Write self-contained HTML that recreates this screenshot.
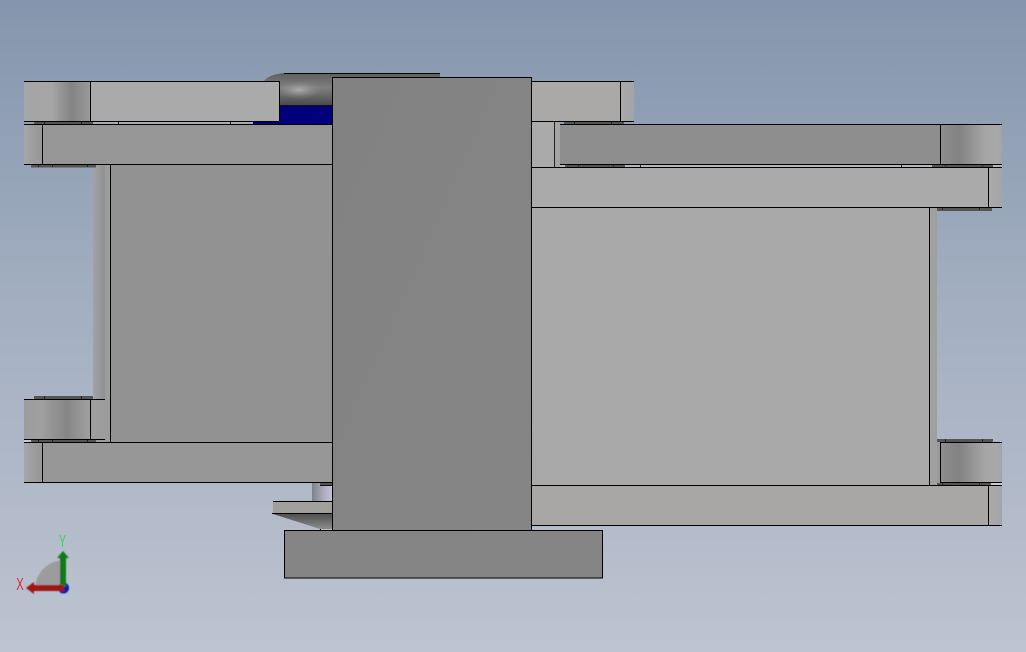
<!DOCTYPE html>
<html>
<head>
<meta charset="utf-8">
<style>
html,body{margin:0;padding:0;width:1026px;height:652px;overflow:hidden;background:#a5b1c2}
svg{display:block}
text{font-family:"Liberation Sans",sans-serif}
path,rect{shape-rendering:crispEdges}
.a{shape-rendering:auto}
</style>
</head>
<body>
<svg width="1026" height="652" viewBox="0 0 1026 652" xmlns="http://www.w3.org/2000/svg">
<defs>
<linearGradient id="bg" x1="0" y1="0" x2="0" y2="1">
<stop offset="0" stop-color="#8495ad"/>
<stop offset=".45" stop-color="#a2aec0"/>
<stop offset="1" stop-color="#bdc3d0"/>
</linearGradient>
<linearGradient id="rollL" x1="0" y1="0" x2="1" y2="0">
<stop offset="0" stop-color="#a6a8ac"/>
<stop offset=".12" stop-color="#a5a5a5"/>
<stop offset=".42" stop-color="#a6a6a6"/>
<stop offset=".72" stop-color="#838383"/>
<stop offset="1" stop-color="#9a9a9a"/>
</linearGradient>
<linearGradient id="rollL2" x1="0" y1="0" x2="1" y2="0">
<stop offset="0" stop-color="#9b9c9e"/>
<stop offset=".25" stop-color="#a0a0a0"/>
<stop offset=".65" stop-color="#868686"/>
<stop offset="1" stop-color="#a0a0a0"/>
</linearGradient>
<linearGradient id="rollR" x1="0" y1="0" x2="1" y2="0">
<stop offset="0" stop-color="#8e8e8e"/>
<stop offset=".3" stop-color="#828282"/>
<stop offset=".72" stop-color="#a6a6a6"/>
<stop offset=".92" stop-color="#a8a8a8"/>
<stop offset="1" stop-color="#a0a4ac"/>
</linearGradient>
<linearGradient id="endL" x1="0" y1="0" x2="1" y2="0">
<stop offset="0" stop-color="#a5a8ae"/>
<stop offset=".4" stop-color="#9f9f9f"/>
<stop offset="1" stop-color="#979797"/>
</linearGradient>
<linearGradient id="endR" x1="0" y1="0" x2="1" y2="0">
<stop offset="0" stop-color="#aaaaaa"/>
<stop offset=".7" stop-color="#a6a6a6"/>
<stop offset="1" stop-color="#a0a5ae"/>
</linearGradient>
<linearGradient id="dome" x1="0" y1="0" x2="0" y2="1">
<stop offset="0" stop-color="#5e5e5e"/>
<stop offset=".45" stop-color="#7f7f7f"/>
<stop offset="1" stop-color="#4a4a4a"/>
</linearGradient>
<radialGradient id="glow" cx=".5" cy=".5" r=".5">
<stop offset="0" stop-color="#b4b4b4" stop-opacity=".9"/>
<stop offset="1" stop-color="#8a8a8a" stop-opacity="0"/>
</radialGradient>
<linearGradient id="cone" x1="0" y1="0" x2="0" y2="1">
<stop offset="0" stop-color="#505050"/>
<stop offset="1" stop-color="#8c8c8c"/>
</linearGradient>
<linearGradient id="shaft" x1="0" y1="0" x2="1" y2="0">
<stop offset="0" stop-color="#7e8089"/>
<stop offset=".55" stop-color="#a9abbd"/>
<stop offset="1" stop-color="#c0c4d2"/>
</linearGradient>
<linearGradient id="center" x1="0" y1="0" x2="1" y2="1">
<stop offset="0" stop-color="#828282"/>
<stop offset="1" stop-color="#858585"/>
</linearGradient>
<linearGradient id="colL" x1="0" y1="0" x2="1" y2="0">
<stop offset="0" stop-color="#a0a3a8"/>
<stop offset="1" stop-color="#8f8f8f"/>
</linearGradient>
<filter id="soft"><feGaussianBlur stdDeviation="0.5"/></filter>
</defs>

<rect width="1026" height="652" fill="url(#bg)"/>

<!-- dome and blue body behind the plates -->
<path class="a" d="M264 105 V81 C268 76 275 74 284 73 H440 V105 Z" fill="url(#dome)"/>
<ellipse class="a" cx="299" cy="90" rx="24" ry="9" fill="url(#glow)"/>
<path d="M284 73.5 H440" stroke="#000" stroke-width="1"/>
<rect x="253" y="105" width="80" height="19" fill="#00007d"/>
<path d="M279 105.5 H332" stroke="#111"/>

<!-- left column -->
<rect x="93" y="164" width="12" height="236" fill="url(#colL)"/>
<rect x="105" y="164" width="5" height="278" fill="#9c9c9c"/>
<rect x="93" y="400" width="12" height="42" fill="#9d9d9d"/>
<rect x="110" y="164" width="222" height="278" fill="#929292"/>
<path d="M110.5 164 V442" stroke="#000"/>

<!-- left top roller / plate -->
<rect x="24" y="81" width="66" height="41" fill="url(#rollL)"/>
<rect x="90" y="81" width="190" height="41" fill="#aaaaaa"/>
<path d="M24 81.5 H279.5 V121.5 M24 121.5 H279.5 M90.5 81 V121" fill="none" stroke="#000"/>

<!-- strip between -->
<rect x="93" y="122" width="160" height="2" fill="#a9adb3"/>
<rect x="34" y="122" width="59" height="2.5" fill="#555"/>
<path d="M44.5 122 V124 M81.5 122 V124 M118.5 122 V124 M230.5 122 V124" stroke="#222"/>

<!-- left top bar -->
<rect x="24" y="124" width="18" height="41" fill="url(#endL)"/>
<rect x="42" y="124" width="290" height="41" fill="#969696"/>
<path d="M24 124.5 H332 M24 164.5 H332 M42.5 124 V164" fill="none" stroke="#000"/>
<rect x="31" y="165" width="65" height="2.5" fill="#555"/>
<path d="M38.5 165 V167 M52.5 165 V167 M87.5 165 V167" stroke="#222"/>

<!-- left lower roller -->
<rect x="34" y="396" width="59" height="3" fill="#555"/>
<path d="M44.5 396 V399 M81.5 396 V399" stroke="#222"/>
<rect x="24" y="399" width="66" height="41" fill="url(#rollL2)"/>
<rect x="90" y="399" width="15" height="41" fill="#9d9d9d"/>
<path d="M24 399.5 H105 M24 439.5 H105 M90.5 399 V439" fill="none" stroke="#000"/>
<rect x="24" y="440" width="8" height="2" fill="#c8ccd4"/>
<rect x="31" y="440" width="65" height="2.5" fill="#555"/>
<path d="M38.5 440 V442 M52.5 440 V442 M87.5 440 V442" stroke="#222"/>

<!-- left bottom bar -->
<rect x="24" y="442" width="18" height="41" fill="url(#endL)"/>
<rect x="42" y="442" width="290" height="41" fill="#979797"/>
<path d="M24 442.5 H332 M24 482.5 H332 M42.5 442 V482" fill="none" stroke="#000"/>

<!-- shaft and disc under left bar -->
<rect x="312" y="483" width="20" height="19" fill="url(#shaft)"/>
<rect x="320" y="483" width="12" height="3" fill="#555"/>
<path d="M320 485.5 H332" stroke="#111"/>
<rect x="273" y="501" width="59" height="12" fill="#a09f9c"/>
<path d="M273 501.5 H332 M272 513.5 H332" stroke="#000"/>
<path class="a" d="M273 514 H332 V529 H320 Z" fill="url(#cone)"/>
<path d="M320 529.5 H321" stroke="#000"/>

<!-- right upper plate -->
<rect x="531" y="81" width="89" height="41" fill="#aaa9a8"/>
<rect x="620" y="81" width="14" height="41" fill="url(#endR)"/>
<path d="M531 81.5 H634 M531 121.5 H634 M620.5 81 V121" fill="none" stroke="#000"/>
<rect x="564" y="122" width="60" height="2.5" fill="#555"/>
<path d="M574.5 122 V124 M611.5 122 V124" stroke="#222"/>

<!-- right strip under plate -->
<rect x="531" y="122" width="23" height="45" fill="#aaaaaa"/>
<rect x="555" y="122" width="5" height="45" fill="#a4a4a4"/>
<path d="M554.5 122 V167" stroke="#222"/>

<!-- right dark bar + roller -->
<rect x="560" y="124" width="381" height="41" fill="#8e8e8e"/>
<rect x="941" y="124" width="61" height="41" fill="url(#rollR)"/>
<path d="M560 124.5 H1002 M560 164.5 H1002 M940.5 124 V164" fill="none" stroke="#000"/>
<rect x="560" y="165" width="442" height="2" fill="#b5b8bf"/>
<rect x="565" y="165" width="60" height="2.5" fill="#555"/>
<rect x="932" y="165" width="61" height="2.5" fill="#555"/>
<path d="M578.5 165 V167 M613.5 165 V167 M640.5 165 V167 M901.5 165 V167 M945.5 165 V167 M982.5 165 V167" stroke="#222"/>

<!-- right mid bar -->
<rect x="531" y="167" width="458" height="41" fill="#aaaaaa"/>
<rect x="989" y="167" width="13" height="41" fill="url(#endR)"/>
<path d="M531 167.5 H1002 M531 207.5 H1002 M988.5 167 V207" fill="none" stroke="#000"/>
<rect x="937" y="208" width="55" height="3" fill="#555"/>
<path d="M942.5 208 V210 M979.5 208 V210" stroke="#222"/>

<!-- right panel -->
<rect x="531" y="208" width="399" height="278" fill="#a9a9a9"/>
<rect x="930" y="208" width="7" height="278" fill="#a0a0a0"/>
<path d="M929.5 207 V485" stroke="#000"/>

<!-- right lower roller -->
<rect x="937" y="439" width="56" height="3" fill="#555"/>
<path d="M945.5 439 V442 M982.5 439 V442" stroke="#222"/>
<rect x="937" y="442" width="4" height="41" fill="#9a9a9a"/>
<rect x="941" y="442" width="61" height="41" fill="url(#rollR)"/>
<path d="M940 442.5 H1002 M940 482.5 H1002 M940.5 442 V482" fill="none" stroke="#000"/>
<rect x="991" y="483" width="11" height="2" fill="#c8ccd4"/>
<rect x="937" y="483" width="54" height="2.5" fill="#555"/>
<path d="M942.5 483 V485 M979.5 483 V485" stroke="#222"/>

<!-- right bottom bar -->
<rect x="531" y="485" width="458" height="41" fill="#a8a7a6"/>
<rect x="989" y="485" width="13" height="41" fill="url(#endR)"/>
<path d="M531 485.5 H1002 M531 525.5 H1002 M988.5 485 V525" fill="none" stroke="#000"/>

<!-- centre column -->
<rect x="332.5" y="77.5" width="199" height="453" fill="url(#center)" stroke="#000"/>

<!-- base block -->
<rect x="284.5" y="530.5" width="318" height="47.5" fill="#858585" stroke="#000"/>

<!-- triad -->
<g filter="url(#soft)">
<path class="a" d="M63 588 H35 C36 572 48 561 63 560 Z" fill="#9c9c9e"/>
<circle class="a" cx="63.500" cy="588" r="5.500" fill="#0a1aa8"/>
<path class="a" d="M60 586 V558 H57 L63 551 L69 558 H66 V587 Z" fill="#0a7a14"/>
<path class="a" d="M64 585 H34 V582 L26 588 L34 594 V591 H64 Z" fill="#a01414"/>
</g>
<text x="0" y="0" font-size="18" fill="#35d35a" text-anchor="middle" transform="translate(62.500 547) scale(.62 .95)">Y</text>
<text x="0" y="0" font-size="18" fill="#d8283c" text-anchor="middle" transform="translate(20 590) scale(.62 .95)">X</text>
</svg>
</body>
</html>
